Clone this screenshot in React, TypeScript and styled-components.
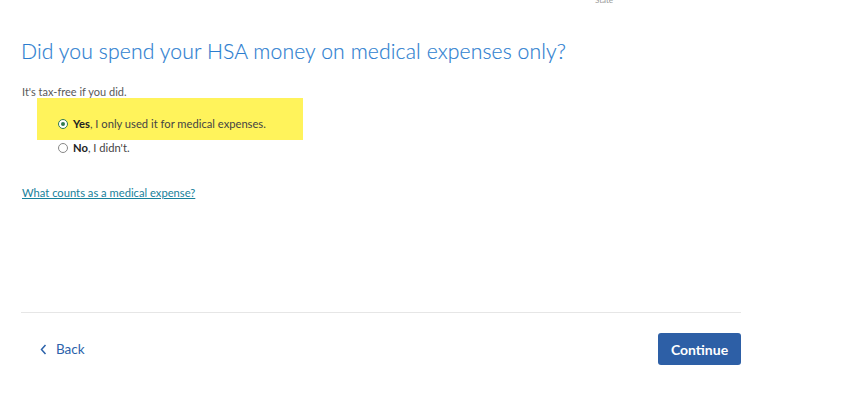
import styled, { createGlobalStyle } from "styled-components";

const Global = createGlobalStyle`
  body {
    margin: 0;
    background: #fff;
    font-family: Lato, "Open Sans", sans-serif;
  }
`;

const Page = styled.div`
  position: relative;
  width: 847px;
  height: 419px;
  overflow: hidden;
`;

const StateLabel = styled.div`
  position: absolute;
  left: 595px;
  top: -5px;
  font-size: 8px;
  color: #9a9a9a;
`;

const Main = styled.div`
  width: 720px;
  padding: 38px 0 0 21px;
  display: flex;
  flex-direction: column;
`;

const Title = styled.h1`
  margin: 0;
  font-size: 21.2px;
  font-weight: 300;
  color: #2b7dcf;
  line-height: 26px;
  letter-spacing: 0.1px;
  -webkit-text-stroke: 0.15px #2b7dcf;
`;

const Hint = styled.p`
  margin: 21px 0 0 1px;
  font-size: 11px;
  color: #595959;
  line-height: 13px;
`;

const Options = styled.div`
  display: flex;
  flex-direction: column;
  margin: 0 0 0 16px;
`;

const Option = styled.label<{ $highlight?: boolean }>`
  display: flex;
  align-items: center;
  gap: 5px;
  width: 266px;
  box-sizing: border-box;
  padding: ${(p) => (p.$highlight ? "19px 0 9px 21px" : "1px 0 1px 21px")};
  background: ${(p) => (p.$highlight ? "#fff35b" : "transparent")};
  font-size: 11.2px;
  color: #444;
  line-height: 14px;
  b {
    color: #222;
    font-weight: 700;
  }
`;

const Radio = styled.span<{ $checked?: boolean }>`
  width: 8px;
  height: 8px;
  border-radius: 50%;
  border: 1px solid ${(p) => (p.$checked ? "#2f7a4e" : "#888")};
  background: #fff;
  display: flex;
  align-items: center;
  justify-content: center;
  &::after {
    content: "";
    width: 4px;
    height: 4px;
    border-radius: 50%;
    background: ${(p) => (p.$checked ? "#2f7a4e" : "transparent")};
  }
`;

const Link = styled.a`
  margin: 30px 0 0 1px;
  font-size: 11.2px;
  color: #17819b;
  text-decoration: underline;
  line-height: 14px;
  align-self: flex-start;
`;

const Divider = styled.hr`
  margin: 112px 0 0;
  border: 0;
  border-top: 1px solid #e6e6e6;
`;

const Footer = styled.div`
  display: flex;
  justify-content: space-between;
  align-items: center;
  margin-top: 20px;
`;

const BackButton = styled.button`
  display: flex;
  align-items: center;
  gap: 9px;
  background: none;
  border: 0;
  padding: 0 0 0 19px;
  font-family: inherit;
  font-size: 13.5px;
  color: #2b62aa;
  cursor: pointer;
`;

const ContinueButton = styled.button`
  width: 83px;
  height: 32px;
  background: #2d5fa6;
  border: 0;
  border-radius: 3px;
  color: #fff;
  font-family: inherit;
  font-size: 14px;
  font-weight: 700;
  cursor: pointer;
`;

export default function App() {
  return (
    <Page>
      <Global />
      <StateLabel>State</StateLabel>
      <Main>
        <Title>Did you spend your HSA money on medical expenses only?</Title>
        <Hint>It's tax-free if you did.</Hint>
        <Options>
          <Option $highlight>
            <Radio $checked />
            <span>
              <b>Yes</b>, I only used it for medical expenses.
            </span>
          </Option>
          <Option>
            <Radio />
            <span>
              <b>No</b>, I didn't.
            </span>
          </Option>
        </Options>
        <Link href="#">What counts as a medical expense?</Link>
        <Divider />
        <Footer>
          <BackButton>
            <svg width="7" height="11" viewBox="0 0 7 11">
              <path d="M5.5 1 L1.5 5.5 L5.5 10" fill="none" stroke="#2b62aa" strokeWidth="1.5" />
            </svg>
            Back
          </BackButton>
          <ContinueButton>Continue</ContinueButton>
        </Footer>
      </Main>
    </Page>
  );
}
